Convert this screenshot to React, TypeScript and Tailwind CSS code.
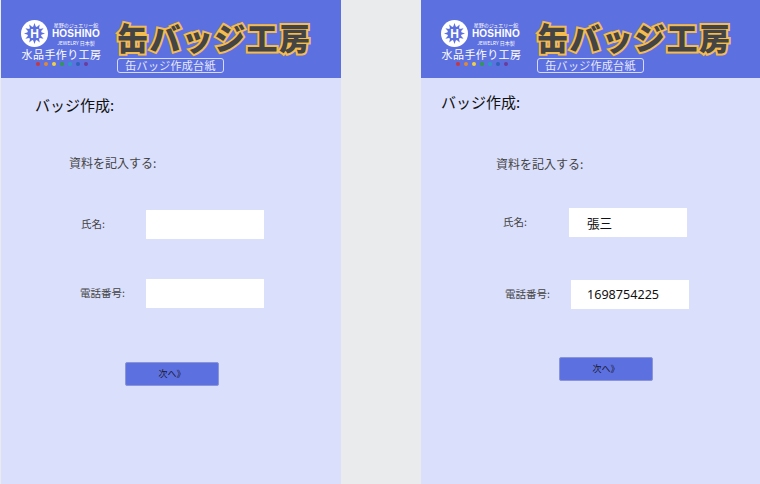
import * as React from "react";

const dots = ["#c8373f", "#e08a35", "#f2d23c", "#2f9a4c", "#2a9cc0", "#2f63b8", "#6a3c9c"];

const StarMark: React.FC = () => {
  // white disc with a cut-out spiky ring
  const spikes = Array.from({ length: 12 }, (_, i) => i * 30);
  return (
    <div className="relative w-[27px] h-[27px] shrink-0">
      <svg viewBox="0 0 27 27" className="w-[27px] h-[27px]">
        <circle cx="13.5" cy="13.5" r="13.5" fill="#ffffff" />
        {spikes.map((deg) => (
          <polygon key={deg} points="13.5,3 15.6,9 11.4,9" fill="#5d70e0" transform={`rotate(${deg} 13.5 13.5)`} />
        ))}
        <circle cx="13.5" cy="13.5" r="7" fill="#5d70e0" />
      </svg>
      <span className="absolute inset-0 flex items-center justify-center text-[12px] font-bold text-white font-['Liberation_Sans',sans-serif]">
        H
      </span>
    </div>
  );
};

const Logo: React.FC = () => (
  <div className="flex flex-col w-[81px] shrink-0 text-white">
    <div className="flex items-center gap-[3px]">
      <StarMark />
      <div className="flex flex-col items-center w-[50px]">
        <span className="text-[5px] leading-[7px] whitespace-nowrap">星野のジュエリー館</span>
        <span className="text-[10px] leading-[11px] font-bold tracking-[0.2px] font-['Liberation_Sans',sans-serif]">
          HOSHINO
        </span>
        <span className="text-[5px] leading-[7px] whitespace-nowrap">JEWELRY 日本製</span>
      </div>
    </div>
    <div className="text-[11px] leading-[14px] tracking-[0.4px] whitespace-nowrap text-center">水品手作り工房</div>
    <div className="flex justify-center gap-[4px] mt-[1px]">
      {dots.map((c) => (
        <svg key={c} viewBox="0 0 4 4" className="w-[4px] h-[4px]">
          <circle cx="2" cy="2" r="2" fill={c} />
        </svg>
      ))}
    </div>
  </div>
);

const Header: React.FC = () => (
  <header className="flex gap-[15px] h-[78px] pl-[20px] pt-[20px] bg-[#5d70e0]">
    <Logo />
    <div className="flex flex-col items-start">
      <h1 className="h-[36px] text-[31px] leading-[33px] font-black tracking-[1.4px] whitespace-nowrap text-[#444444] [-webkit-text-stroke:4px_#f4bb4e] [paint-order:stroke_fill]">
        缶バッジ工房
      </h1>
      <div className="flex items-center justify-center w-[107px] h-[15px] mt-[2px] rounded-[3px] border border-[#d5daf8] text-[11px] leading-none tracking-[0.3px] text-[#e6e9fc] whitespace-nowrap">
        缶バッジ作成台紙
      </div>
    </div>
  </header>
);

interface FieldProps {
  label: string;
  value?: string;
  rowClass: string;
  labelClass: string;
  inputClass: string;
}

const Field: React.FC<FieldProps> = ({ label, value, rowClass, labelClass, inputClass }) => (
  <div className={`flex items-center h-[29px] ${rowClass}`}>
    <span className={`text-[10.5px] leading-none text-[#444444] whitespace-nowrap ${labelClass}`}>{label}</span>
    <input
      readOnly
      value={value ?? ""}
      className={`w-[118px] h-[29px] bg-white text-[12.6px] text-[#111111] outline-none font-['Noto_Sans','Noto_Sans_CJK_JP',sans-serif] ${inputClass}`}
    />
  </div>
);

const LeftPanel: React.FC = () => (
  <section className="flex flex-col w-[340px] ml-[1px] bg-[#dadffb]">
    <Header />
    <h2 className="mt-[17px] ml-[34px] text-[15px] leading-[20px] text-[#111111]">バッジ作成:</h2>
    <p className="mt-[39px] ml-[68px] text-[12px] leading-[18px] text-[#444444]">資料を記入する:</p>
    <Field label="氏名:" rowClass="mt-[38px] ml-[80px]" labelClass="w-[65px]" inputClass="" />
    <Field label="電話番号:" rowClass="mt-[40px] ml-[79px]" labelClass="w-[66px]" inputClass="" />
    <button className="self-start w-[94px] h-[24px] mt-[54px] ml-[124px] rounded-[2px] border border-[#8a94d8] bg-[#5d70e0] text-[9px] text-[#1a1a2e]">
      次へ》
    </button>
  </section>
);

const RightPanel: React.FC = () => (
  <section className="flex flex-col w-[339px] bg-[#dadffb]">
    <Header />
    <h2 className="mt-[14px] ml-[20px] text-[15px] leading-[20px] text-[#111111]">バッジ作成:</h2>
    <p className="mt-[43px] ml-[75px] text-[12px] leading-[18px] text-[#444444]">資料を記入する:</p>
    <Field label="氏名:" value="張三" rowClass="mt-[35px] ml-[82px]" labelClass="w-[66px]" inputClass="pl-[18px]" />
    <Field label="電話番号:" value="1698754225" rowClass="mt-[43px] ml-[84px]" labelClass="w-[66px]" inputClass="pl-[16px]" />
    <button className="self-start w-[94px] h-[24px] mt-[48px] ml-[138px] rounded-[2px] border border-[#8a94d8] bg-[#5d70e0] text-[9px] text-[#1a1a2e]">
      次へ》
    </button>
  </section>
);

export default function App() {
  return (
    <div className="flex justify-between w-[760px] h-[484px] overflow-hidden bg-[#e9ebec] font-['Noto_Sans_CJK_JP',sans-serif]">
      <LeftPanel />
      <RightPanel />
    </div>
  );
}
